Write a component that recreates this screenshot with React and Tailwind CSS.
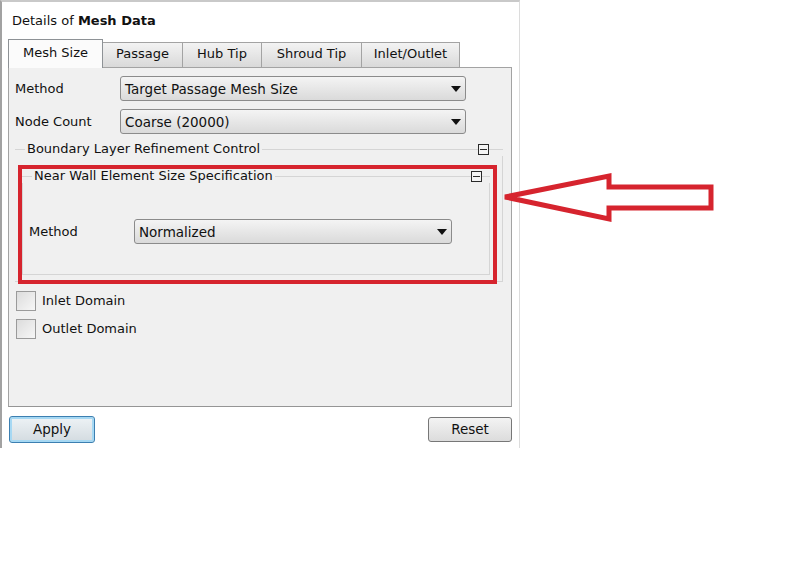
const tabs = [
  { label: 'Mesh Size', w: 'w-[95px]', active: true },
  { label: 'Passage', w: 'w-[80px]' },
  { label: 'Hub Tip', w: 'w-[79px]' },
  { label: 'Shroud Tip', w: 'w-[100px]' },
  { label: 'Inlet/Outlet', w: 'w-[98px]' },
];

function Dropdown({ value, width }) {
  return (
    <div
      className={`${width} h-[25px] flex items-center justify-between rounded-[3px] border border-[#8b8b8b] bg-gradient-to-b from-[#f4f4f4] to-[#dadada] pl-[4px] pr-[4px]`}
    >
      <span className="leading-[16px] text-[13.5px]">{value}</span>
      <span className="w-0 h-0 border-l-[5px] border-r-[5px] border-t-[6px] border-l-transparent border-r-transparent border-t-[#111]" />
    </div>
  );
}

function CollapseIcon() {
  return (
    <span className="w-[11px] h-[11px] border border-[#2a2a2a] bg-[#f4f4f4] flex items-center justify-center shrink-0">
      <span className="w-[7px] h-[1px] bg-[#2a2a2a]" />
    </span>
  );
}

function GroupHeader({ title, tail }) {
  return (
    <div className="flex items-center h-[14px]">
      <span className="w-[10px] h-px bg-[#d5d5d5]" />
      <span className="px-[2px] leading-[16px] whitespace-nowrap">{title}</span>
      <span className="flex-1 h-px bg-[#d5d5d5]" />
      <CollapseIcon />
      <span className={`${tail} h-px bg-[#d5d5d5]`} />
    </div>
  );
}

function Checkbox({ label }) {
  return (
    <div className="flex items-center h-[20px] ml-[7px] gap-[6px]">
      <span className="w-[20px] h-[20px] border border-[#9a9a9a] bg-gradient-to-br from-[#dcdcdc] to-[#f7f7f7]" />
      <span className="leading-[16px]">{label}</span>
    </div>
  );
}

export default function App() {
  return (
    <div className="relative w-[794px] h-[578px] bg-white text-[13px] text-[#111] font-['DejaVu_Sans',sans-serif]">
      <div className="w-[520px] h-[448px] border-t-2 border-t-[#c9c9c9] border-l-2 border-l-[#a2a2a2] border-r border-r-[#dcdcdc] flex flex-col">
        <div className="mt-[11px] ml-[10px] h-[16px] leading-[16px]">
          Details of <span className="font-bold">Mesh Data</span>
        </div>

        <div className="mt-[9px] ml-[6px] h-[29px] flex items-end">
          {tabs.map((t) =>
            t.active ? (
              <div
                key={t.label}
                className={`${t.w} h-[29px] -mb-px relative z-10 flex items-center justify-center border border-b-0 border-[#8e9296] bg-[#fbfbfb] pb-[3px]`}
              >
                {t.label}
              </div>
            ) : (
              <div
                key={t.label}
                className={`${t.w} h-[25px] flex items-center justify-center border border-l-0 border-b-0 border-[#a3a3a3] bg-gradient-to-b from-[#f3f3f3] to-[#d9d9d9] pb-[2px]`}
              >
                {t.label}
              </div>
            )
          )}
        </div>

        <div className="ml-[6px] w-[504px] h-[340px] border border-[#a3a3a3] border-b-[#959595] bg-[#f0f0f0] pt-[8px] flex flex-col">
          <div className="flex items-center h-[25px] pl-[6px]">
            <span className="w-[105px]">Method</span>
            <Dropdown value="Target Passage Mesh Size" width="w-[346px]" />
          </div>
          <div className="flex items-center h-[25px] pl-[6px] mt-[8px]">
            <span className="w-[105px]">Node Count</span>
            <Dropdown value="Coarse (20000)" width="w-[346px]" />
          </div>

          <div className="mt-[8px] ml-[6px] mr-[8px]">
            <GroupHeader title="Boundary Layer Refinement Control" tail="w-[14px]" />
            <div className="border-r border-b border-[#d5d5d5] pt-[13px] pb-[6px]">
              <div className="ml-[7px] mr-[12px]">
                <GroupHeader title="Near Wall Element Size Specification" tail="w-[8px]" />
                <div className="border-l border-r border-b border-[#d5d5d5] pt-[36px] pb-[30px] pl-[6px]">
                  <div className="flex items-center h-[25px]">
                    <span className="w-[105px]">Method</span>
                    <Dropdown value="Normalized" width="w-[318px]" />
                  </div>
                </div>
              </div>
            </div>
          </div>

          <div className="mt-[9px] flex flex-col gap-[8px]">
            <Checkbox label="Inlet Domain" />
            <Checkbox label="Outlet Domain" />
          </div>
        </div>

        <div className="mt-[9px] ml-[7px] mr-[7px] flex items-start justify-between">
          <button
            type="button"
            className="w-[86px] h-[27px] rounded-[3px] border border-[#3c7fb1] bg-gradient-to-b from-[#eef3f6] to-[#d3dbe0] shadow-[inset_0_0_0_2px_#a6d8f3] text-[13.5px]"
          >
            Apply
          </button>
          <button
            type="button"
            className="mt-[1px] w-[84px] h-[25px] rounded-[3px] border border-[#777] bg-gradient-to-b from-[#f3f3f3] to-[#dcdcdc] text-[13.5px]"
          >
            Reset
          </button>
        </div>
      </div>

      <div className="absolute left-[18px] top-[165px] w-[479px] h-[119px] border-4 border-[#d6242e]" />

      <svg className="absolute left-[495px] top-[160px]" width="230" height="70" viewBox="0 0 230 70">
        <polygon
          points="10,37 114,16 114,27 216,27 216,48 114,48 114,59"
          fill="none"
          stroke="#d6242e"
          strokeWidth="5"
          strokeLinejoin="miter"
        />
      </svg>
    </div>
  );
}
